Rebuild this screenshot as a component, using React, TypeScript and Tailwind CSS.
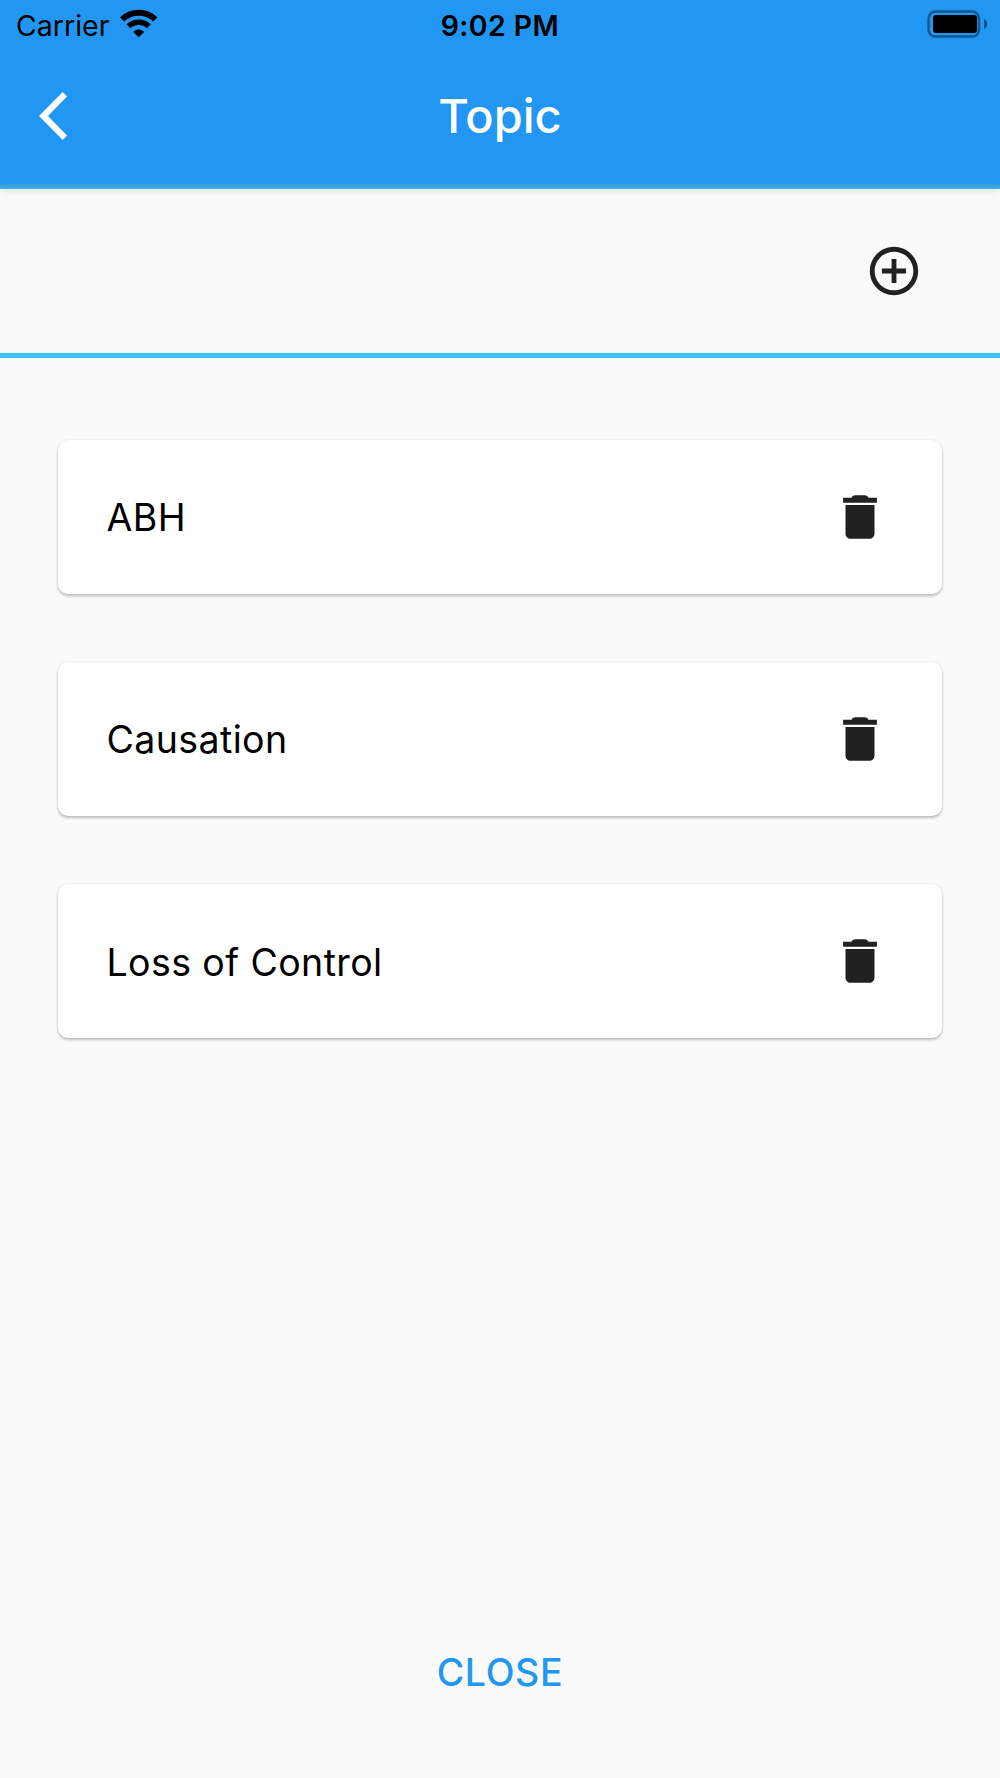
const topics = ["ABH", "Causation", "Loss of Control"];

const WifiIcon = () => (
  <svg className="ml-[11px] mt-2 h-[30px] w-[38px]" viewBox="0 0 38 30" fill="none" stroke="#000">
    <path d="M2.1 11.4A24 24 0 0 1 35.3 11.4" strokeWidth="5.8" />
    <path d="M8.5 18.2A15 15 0 0 1 28.9 18.2" strokeWidth="5.6" />
    <path d="M13.2 24Q18.7 18.6 24.2 24L18.7 29.2Z" fill="#000" stroke="none" />
  </svg>
);

const BatteryIcon = () => (
  <svg className="h-[30px] w-[62px]" viewBox="0 0 62 30">
    <rect x="1.6" y="2.6" width="50.4" height="25" rx="6.6" fill="none" stroke="#000" strokeOpacity="0.42" strokeWidth="2.5" />
    <rect x="6" y="6" width="44" height="18" rx="3" fill="#000" />
    <path d="M57 10Q60.2 11.4 60.2 15Q60.2 18.6 57 20Z" fill="#000" fillOpacity="0.5" />
  </svg>
);

const BackIcon = () => (
  <svg className="h-12 w-7" viewBox="0 0 28 48" fill="#fff">
    <path d="M23.7 0L28 4.4L9 24L28 43.6L23.7 48L0 24Z" />
  </svg>
);

const AddIcon = () => (
  <svg className="size-[58px]" viewBox="0 0 24 24" fill="#212121">
    <path d="M13 7h-2v4H7v2h4v4h2v-4h4v-2h-4V7zm-1-5C6.48 2 2 6.48 2 12s4.48 10 10 10 10-4.48 10-10S17.52 2 12 2zm0 18c-4.41 0-8-3.59-8-8s3.59-8 8-8 8 3.59 8 8-3.59 8-8 8z" />
  </svg>
);

const TrashIcon = () => (
  <svg className="size-[58px]" viewBox="0 0 24 24" fill="#212121">
    <path d="M6 18.8c0 1.3.9 2.2 2.2 2.2h7.6c1.3 0 2.2-.9 2.2-2.2V7H6v11.8zM19 4h-3.5c-.4-.7-.9-1-1.6-1h-3.8c-.7 0-1.2.3-1.6 1H5v2.1h14V4z" />
  </svg>
);

const TopicCard = ({ name }: { name: string }) => (
  <li className="flex h-[154px] items-center justify-between rounded-[10px] bg-white pl-[48.5px] pr-[53px] shadow-[0_2px_3px_rgba(0,0,0,0.24),0_0_2px_rgba(0,0,0,0.1)]">
    <span className="pt-[2px] text-[37.5px] leading-none tracking-[0.4px] text-black">{name}</span>
    <button aria-label="Delete">
      <TrashIcon />
    </button>
  </li>
);

const App = () => {
  return (
    <div className="flex h-[1778px] w-[1000px] flex-col bg-[#fafafa] font-['Inter',sans-serif]">
      <header className="flex h-[188.5px] shrink-0 flex-col bg-[#2196f3] shadow-[0_2px_8px_rgba(0,0,0,0.1)]">
        <div className="grid h-[50px] grid-cols-3 text-[28.5px] leading-[52px] text-black">
          <div className="flex pl-4">
            <span>Carrier</span>
            <WifiIcon />
          </div>
          <div className="text-center font-semibold tracking-[0.4px]">9:02 PM</div>
          <div className="flex justify-end pr-[11px] pt-[9px]">
            <BatteryIcon />
          </div>
        </div>
        <div className="grid h-[134px] grid-cols-3 items-center pb-[2px]">
          <button aria-label="Back" className="justify-self-start pl-[39px]">
            <BackIcon />
          </button>
          <h1 className="pb-[2px] text-center text-[47px] font-medium leading-none text-white">Topic</h1>
        </div>
        <div className="flex-1 bg-linear-to-b from-[#34a0d2] to-[#3bb2e6]" />
      </header>

      <div className="flex h-[169px] shrink-0 items-center justify-end border-b-[5px] border-[#40c4ff] pr-[77.5px]">
        <button aria-label="Add topic">
          <AddIcon />
        </button>
      </div>

      <ul className="flex flex-1 flex-col gap-[68.3px] px-[58px] pt-[82.4px]">
        {topics.map((name) => (
          <TopicCard key={name} name={name} />
        ))}
      </ul>

      <footer className="flex h-[212px] shrink-0 justify-center">
        <button className="h-[213px] pt-px text-[37.5px] font-medium leading-none tracking-[0.7px] text-[#2196f3]">
          CLOSE
        </button>
      </footer>
    </div>
  );
};

export default App;
